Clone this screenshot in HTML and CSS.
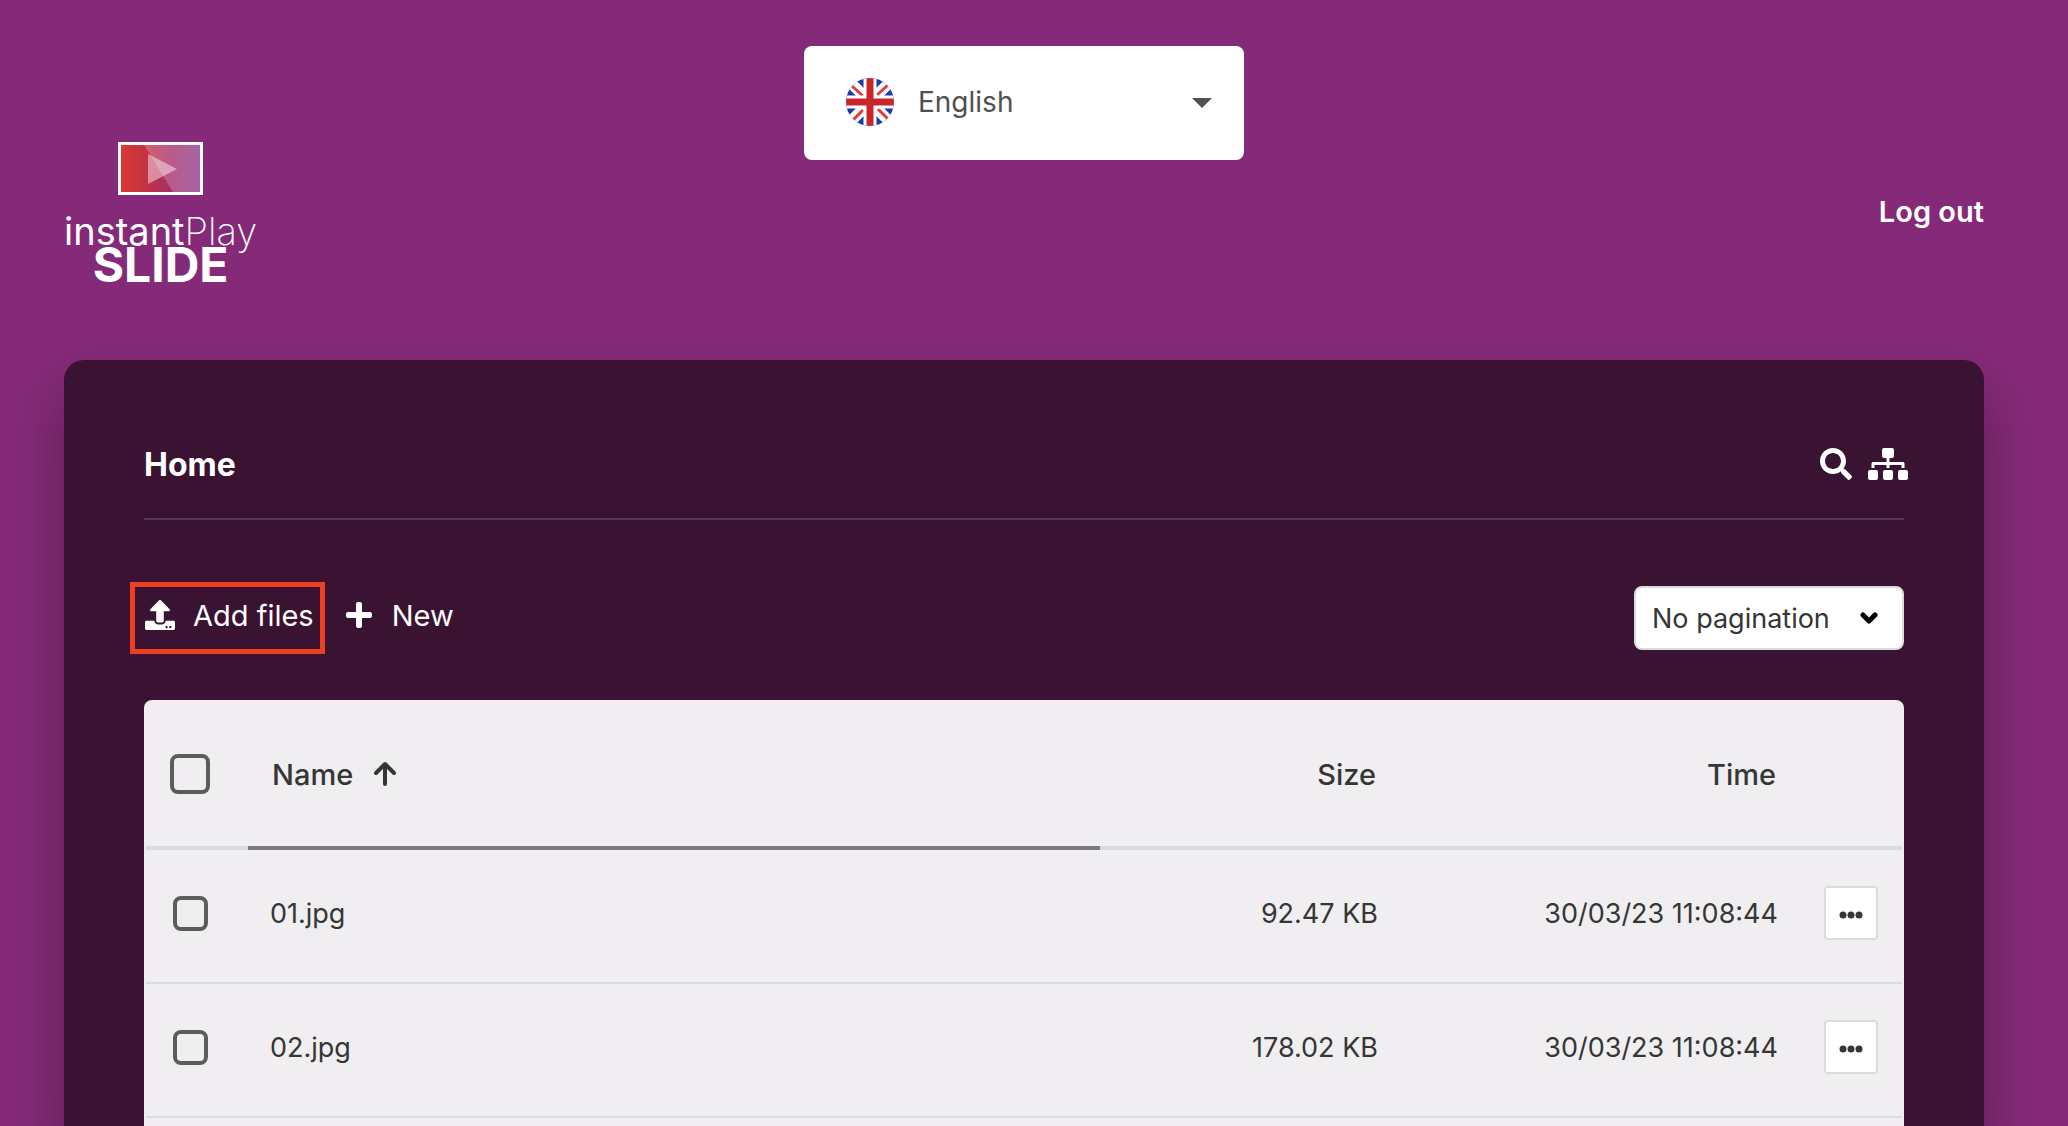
FILE: index.html
```html
<!DOCTYPE html>
<html lang="en">
<head>
    <meta charset="UTF-8">
    <meta name="viewport" content="width=device-width, initial-scale=1.0">
    <title>instantPlay SLIDE - Home</title>
    <link rel="stylesheet" href="styles.css">
</head>
<body>
    <header class="header">
        <a class="logo" href="#">
            <svg class="logo-mark" viewBox="0 0 85 53" aria-hidden="true">
                <defs>
                    <linearGradient id="logo-fill" x1="0" x2="1">
                        <stop offset="0" stop-color="#dc3832"/>
                        <stop offset="0.3" stop-color="#c43343"/>
                        <stop offset="0.65" stop-color="#a42e68"/>
                        <stop offset="1" stop-color="#8c3a90"/>
                    </linearGradient>
                </defs>
                <rect x="1.5" y="1.5" width="82" height="50" fill="url(#logo-fill)" stroke="#fff" stroke-width="3"/>
                <path d="M26 3h56v47H55z" fill="#fff" opacity="0.22"/>
                <path d="M30 12v30l29-15z" fill="#fff" opacity="0.45"/>
            </svg>
            <span class="logo-name">instant<span class="logo-thin">Play</span></span>
            <span class="logo-product">SLIDE</span>
        </a>

        <div class="language">
            <svg class="flag" viewBox="0 0 48 48" aria-hidden="true">
                <clipPath id="flag-circle"><circle cx="24" cy="24" r="24"/></clipPath>
                <g clip-path="url(#flag-circle)">
                    <rect width="48" height="48" fill="#1c3da8"/>
                    <path d="M2 2l44 44M46 2L2 46" stroke="#fff" stroke-width="11"/>
                    <path d="M6 8l11 10M42 7L31 17M7 42l10-10M42 41L32 31" stroke="#e23b3b" stroke-width="3"/>
                    <path d="M24 0v48M0 24h48" stroke="#fff" stroke-width="13"/>
                    <path d="M24 0v48M0 24h48" stroke="#c9262c" stroke-width="7"/>
                </g>
            </svg>
            <select class="language-select" aria-label="Language">
                <option>English</option>
            </select>
            <svg class="caret" viewBox="0 0 20 10" aria-hidden="true"><path d="M0 0h20L10 10z" fill="#505050"/></svg>
        </div>

        <a class="logout" href="#">Log out</a>
    </header>

    <main class="panel">
        <div class="panel-header">
            <h1>Home</h1>
            <div class="panel-tools">
                <button class="icon-button" aria-label="Search">
                    <svg width="32" height="32" viewBox="0 0 512 512"><path fill="#fff" d="M505 442.7L405.3 343c-4.5-4.5-10.6-7-17-7H372c27.6-35.3 44-79.7 44-128C416 93.1 322.9 0 208 0S0 93.1 0 208s93.1 208 208 208c48.3 0 92.7-16.4 128-44v16.3c0 6.4 2.5 12.5 7 17l99.7 99.7c9.4 9.4 24.6 9.4 33.9 0l28.3-28.3c9.4-9.4 9.4-24.6.1-34zM208 336c-70.7 0-128-57.2-128-128 0-70.7 57.2-128 128-128 70.7 0 128 57.2 128 128 0 70.7-57.2 128-128 128z"/></svg>
                </button>
                <button class="icon-button" aria-label="Folder tree">
                    <svg width="40" height="32" viewBox="0 0 40 32">
                        <path d="M20 9v11M5 20v-4.500h30V20" fill="none" stroke="#fff" stroke-width="3" stroke-linejoin="round"/>
                        <g fill="#fff">
                            <rect x="14" width="12" height="10" rx="2"/>
                            <rect y="22" width="10" height="10" rx="2"/>
                            <rect x="15" y="22" width="10" height="10" rx="2"/>
                            <rect x="30" y="22" width="10" height="10" rx="2"/>
                        </g>
                    </svg>
                </button>
            </div>
        </div>

        <div class="toolbar">
            <button class="tool-button highlighted">
                <svg width="30" height="30" viewBox="0 0 512 512"><path fill="#fff" d="M296 384h-80c-13.300 0-24-10.700-24-24V192h-87.700c-17.800 0-26.700-21.500-14.100-34.100L242.300 5.700c7.500-7.500 19.800-7.500 27.300 0l152.200 152.200c12.600 12.600 3.700 34.100-14.100 34.100H320v168c0 13.300-10.700 24-24 24zm216-8v112c0 13.300-10.700 24-24 24H24c-13.300 0-24-10.700-24-24V376c0-13.300 10.700-24 24-24h136v8c0 30.900 25.100 56 56 56h80c30.900 0 56-25.100 56-56v-8h136c13.300 0 24 10.700 24 24zm-124 88c0-11-9-20-20-20s-20 9-20 20 9 20 20 20 20-9 20-20zm64 0c0-11-9-20-20-20s-20 9-20 20 9 20 20 20 20-9 20-20z"/></svg>
                Add files
            </button>
            <button class="tool-button">
                <svg width="26" height="26" viewBox="0 0 26 26"><path fill="#fff" d="M12 0h2q2 0 2 2v8h8q2 0 2 2v2q0 2-2 2h-8v8q0 2-2 2h-2q-2 0-2-2v-8H2q-2 0-2-2v-2q0-2 2-2h8V2q0-2 2-2z"/></svg>
                New
            </button>
            <div class="pagination">
                <select class="pagination-select" aria-label="Pagination">
                    <option>No pagination</option>
                </select>
                <svg class="chevron" viewBox="0 0 18 12" aria-hidden="true"><path d="M3 3l6 6 6-6" fill="none" stroke="#000" stroke-width="5" stroke-linecap="round" stroke-linejoin="round"/></svg>
            </div>
        </div>

        <div class="table-wrap">
            <table class="files">
                <thead>
                    <tr>
                        <th class="col-check"><input type="checkbox" class="check check-all" aria-label="Select all"></th>
                        <th class="col-name">
                            <span class="sort">Name
                                <svg width="24" height="26" viewBox="0 0 24 26" aria-hidden="true"><path d="M12 23V3M3 12l9-9 9 9" fill="none" stroke="#363636" stroke-width="4" stroke-linecap="round" stroke-linejoin="round"/></svg>
                            </span>
                        </th>
                        <th class="col-size">Size</th>
                        <th class="col-time">Time</th>
                        <th class="col-actions"></th>
                    </tr>
                </thead>
                <tbody>
                    <tr>
                        <td class="col-check"><input type="checkbox" class="check" aria-label="Select 01.jpg"></td>
                        <td class="col-name">01.jpg</td>
                        <td class="col-size">92.47 KB</td>
                        <td class="col-time">30/03/23 11:08:44</td>
                        <td class="col-actions">
                            <button class="more" aria-label="More actions for 01.jpg"><svg width="24" height="8" viewBox="0 0 24 8"><g fill="#363636"><circle cx="4" cy="4" r="3.500"/><circle cx="12" cy="4" r="3.500"/><circle cx="20" cy="4" r="3.500"/></g></svg></button>
                        </td>
                    </tr>
                    <tr>
                        <td class="col-check"><input type="checkbox" class="check" aria-label="Select 02.jpg"></td>
                        <td class="col-name">02.jpg</td>
                        <td class="col-size">178.02 KB</td>
                        <td class="col-time">30/03/23 11:08:44</td>
                        <td class="col-actions">
                            <button class="more" aria-label="More actions for 02.jpg"><svg width="24" height="8" viewBox="0 0 24 8"><g fill="#363636"><circle cx="4" cy="4" r="3.500"/><circle cx="12" cy="4" r="3.500"/><circle cx="20" cy="4" r="3.500"/></g></svg></button>
                        </td>
                    </tr>
                </tbody>
            </table>
        </div>
    </main>
</body>
</html>
```
FILE: styles.css
```css
* {
    box-sizing: border-box;
}
body {
    margin: 0;
    padding: 0 84px 0 64px;
    min-height: 100vh;
    display: flex;
    flex-direction: column;
    background: #852a78;
    font-family: Inter, "Liberation Sans", sans-serif;
    font-size: 27px;
    color: #363636;
}
button, select, input {
    font: inherit;
    margin: 0;
}
button {
    cursor: pointer;
}

/* header */
.header {
    display: grid;
    grid-template-columns: 1fr 440px 1fr;
    align-items: start;
    padding: 46px 0 79px;
}
.logo {
    justify-self: start;
    display: flex;
    flex-direction: column;
    align-items: center;
    margin-top: 96px;
    color: #fff;
    text-decoration: none;
}
.logo-mark {
    width: 85px;
    height: 53px;
    margin-bottom: 18px;
}
.logo-name {
    font-size: 38px;
    line-height: 36px;
    font-weight: 400;
}
.logo-thin {
    font-weight: 200;
}
.logo-product {
    font-size: 48px;
    line-height: 32px;
    font-weight: 700;
}
.language {
    position: relative;
}
.language-select {
    appearance: none;
    width: 100%;
    height: 114px;
    padding: 0 60px 2px 114px;
    border: none;
    border-radius: 8px;
    background: #fff;
    color: #505050;
    font-size: 28px;
}
.flag {
    position: absolute;
    top: 32px;
    left: 42px;
    width: 48px;
    height: 48px;
    pointer-events: none;
}
.caret {
    position: absolute;
    top: 52px;
    right: 32px;
    width: 20px;
    height: 10px;
    pointer-events: none;
}
.logout {
    justify-self: end;
    margin-top: 148px;
    font-size: 29px;
    line-height: 36px;
    font-weight: 600;
    color: #fff;
    text-decoration: none;
}

/* file manager panel */
.panel {
    flex: 1;
    display: flex;
    flex-direction: column;
    padding: 80px 80px 0;
    border-radius: 20px 20px 0 0;
    background: #3a1232;
    box-shadow: 0 32px 60px rgba(0, 0, 0, 0.3);
    clip-path: inset(-60px -84px 0 -64px);
}
.panel-header {
    display: flex;
    justify-content: space-between;
    align-items: center;
    height: 80px;
    padding-bottom: 30px;
    border-bottom: 2px solid #5a3654;
}
.panel-header h1 {
    margin: 0;
    font-size: 32px;
    font-weight: 700;
    color: #fff;
}
.panel-tools {
    display: flex;
    gap: 16px;
    margin-right: -4px;
}
.icon-button {
    display: flex;
    padding: 0;
    border: none;
    background: none;
}
.toolbar {
    display: flex;
    align-items: center;
    gap: 16px;
    margin: 62px 0 46px -14px;
}
.tool-button {
    display: flex;
    align-items: center;
    gap: 20px;
    height: 72px;
    padding: 0 0 6px 5px;
    border: none;
    background: none;
    color: #fff;
    font-size: 29px;
}
.highlighted {
    gap: 18px;
    padding: 0 6px 6px 10px;
    border: 5px solid #ed4023;
}
.pagination {
    position: relative;
    margin-left: auto;
}
.pagination-select {
    appearance: none;
    height: 64px;
    padding: 0 72px 0 16px;
    border: 2px solid #dbdbdb;
    border-radius: 8px;
    background: #fff;
    color: #363636;
}
.chevron {
    position: absolute;
    top: 26px;
    right: 26px;
    width: 18px;
    height: 12px;
    pointer-events: none;
}

/* file list */
.table-wrap {
    flex: 1;
    padding: 0 2px;
    border-radius: 8px 8px 0 0;
    background: #f0eef1;
}
.files {
    width: 100%;
    border-collapse: separate;
    border-spacing: 0;
    table-layout: fixed;
}
.files th {
    height: 150px;
    padding: 2px 24px 0;
    border-bottom: 4px solid #dbdadd;
    font-size: 29px;
    font-weight: 500;
    text-align: left;
}
.files td {
    height: 134px;
    padding: 0 22px 6px;
    border-bottom: 2px solid #dbdadd;
}
.files .col-check {
    width: 102px;
    padding-left: 24px;
    padding-right: 0;
}
.files th.col-name {
    border-bottom-color: #7b797c;
}
.files .col-size {
    width: 300px;
    text-align: right;
}
.files .col-time {
    width: 400px;
    text-align: right;
}
.files .col-actions {
    width: 102px;
    padding-left: 24px;
    padding-right: 24px;
}
.sort {
    display: flex;
    align-items: center;
    gap: 20px;
}
.check {
    appearance: none;
    display: block;
    width: 35px;
    height: 35px;
    margin-left: 3px;
    border: 4px solid #5c5c5c;
    border-radius: 8px;
}
.check-all {
    width: 40px;
    height: 40px;
    margin-left: 0;
}
.more {
    display: flex;
    justify-content: center;
    align-items: center;
    width: 54px;
    height: 54px;
    padding: 4px 0 0;
    border: 2px solid #dbdbdb;
    border-radius: 4px;
    background: #fff;
}
```
